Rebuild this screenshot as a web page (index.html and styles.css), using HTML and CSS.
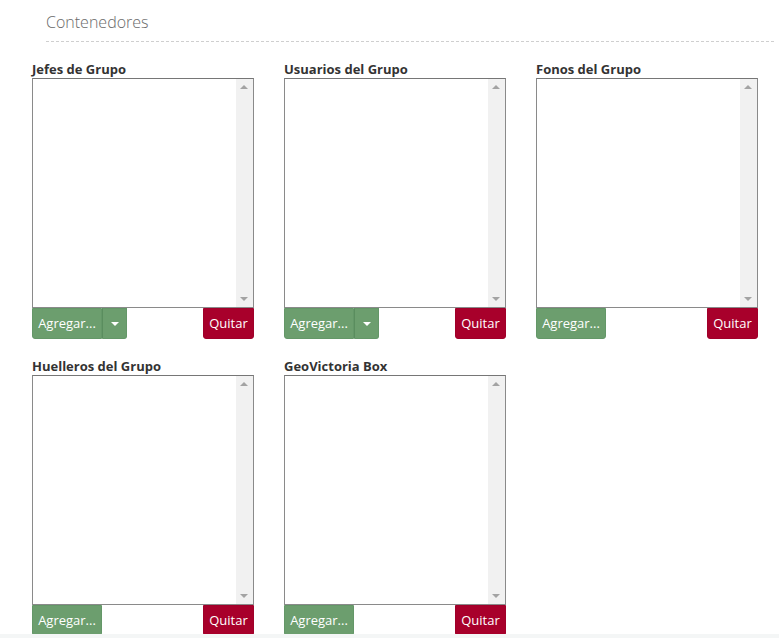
FILE: index.html
```html
<!DOCTYPE html>
<html lang="es">
<head>
<meta charset="utf-8">
<link rel="stylesheet" href="styles.css">
</head>
<body>
<div class="page">
  <div class="header"><h3 class="title">Contenedores</h3></div>
  <div class="grid">
    <div class="box">
      <div class="label">Jefes de Grupo</div>
      <div class="list"><div class="sb"><span class="up"></span><span class="down"></span></div></div>
      <div class="actions">
        <div class="split"><button class="btn green">Agregar...</button><button class="btn green caret"><span class="tri"></span></button></div>
        <button class="btn red">Quitar</button>
      </div>
    </div>
    <div class="box">
      <div class="label">Usuarios del Grupo</div>
      <div class="list"><div class="sb"><span class="up"></span><span class="down"></span></div></div>
      <div class="actions">
        <div class="split"><button class="btn green">Agregar...</button><button class="btn green caret"><span class="tri"></span></button></div>
        <button class="btn red">Quitar</button>
      </div>
    </div>
    <div class="box">
      <div class="label">Fonos del Grupo</div>
      <div class="list"><div class="sb"><span class="up"></span><span class="down"></span></div></div>
      <div class="actions">
        <button class="btn green single">Agregar...</button>
        <button class="btn red">Quitar</button>
      </div>
    </div>
    <div class="box">
      <div class="label">Huelleros del Grupo</div>
      <div class="list"><div class="sb"><span class="up"></span><span class="down"></span></div></div>
      <div class="actions">
        <button class="btn green single">Agregar...</button>
        <button class="btn red">Quitar</button>
      </div>
    </div>
    <div class="box">
      <div class="label">GeoVictoria Box</div>
      <div class="list"><div class="sb"><span class="up"></span><span class="down"></span></div></div>
      <div class="actions">
        <button class="btn green single">Agregar...</button>
        <button class="btn red">Quitar</button>
      </div>
    </div>
  </div>
</div>
<div class="footer"></div>
</body>
</html>
```
FILE: styles.css
```css
* { box-sizing: border-box; }
html, body { margin: 0; padding: 0; background: #fff; }
body {
  font-family: "Open Sans", "Liberation Sans", sans-serif;
  font-size: 13px;
  color: #333;
  height: 638px;
  overflow: hidden;
  position: relative;
}
.page { padding-left: 32px; }
.header {
  margin-left: 14px;
  width: 728px;
  border-bottom: 1px dashed #cfcfcf;
  padding-top: 11px;
  height: 42px;
}
.title {
  margin: 0;
  font-weight: 300;
  font-size: 16px;
  line-height: 22px;
  color: #6a6a6a;
}
.grid {
  display: grid;
  grid-template-columns: repeat(3, 222px);
  column-gap: 30px;
  row-gap: 18px;
  padding-top: 18px;
}
.label {
  font-weight: 700;
  font-size: 13px;
  line-height: 18px;
  color: #333;
}
.list {
  height: 230px;
  border: 1px solid #8a8a8a;
  border-top-color: #767676;
  background: #fff;
  display: flex;
  justify-content: flex-end;
}
.sb {
  width: 17px;
  background: #f1f1f1;
  position: relative;
}
.up, .down {
  position: absolute;
  left: 4px;
  width: 0; height: 0;
  border-left: 4px solid transparent;
  border-right: 4px solid transparent;
}
.up { top: 6px; border-bottom: 4px solid #a3a3a3; }
.down { bottom: 6px; border-top: 4px solid #a3a3a3; }
.actions {
  display: flex;
  justify-content: space-between;
  height: 31px;
}
.split { display: flex; }
.btn {
  font-family: "Open Sans", "Liberation Sans", sans-serif;
  font-size: 13px;
  color: #fff;
  border: 1px solid transparent;
  height: 31px;
  padding: 0 5px;
  margin: 0;
  cursor: pointer;
  line-height: 29px;
}
.green {
  background: #6c9e6e;
  border-color: #649768;
}
.split .green:first-child {
  border-radius: 0 0 0 3px;
  width: 70px;
}
.single { width: 70px; border-radius: 0 0 3px 3px; }
.caret {
  width: 25px;
  border-radius: 0 0 3px 0;
  border-left-color: #5a8d5e;
  display: flex;
  align-items: center;
  justify-content: center;
  padding: 0;
}
.tri {
  width: 0; height: 0;
  border-left: 4px solid transparent;
  border-right: 4px solid transparent;
  border-top: 4px solid #fff;
}
.red {
  background: #a8002b;
  border-color: #a0002a;
  border-radius: 0 0 3px 3px;
  width: 51px;
}
.footer {
  position: absolute;
  left: 0; right: 0; bottom: 0;
  height: 4px;
  background: #f4f6f6;
}
```
